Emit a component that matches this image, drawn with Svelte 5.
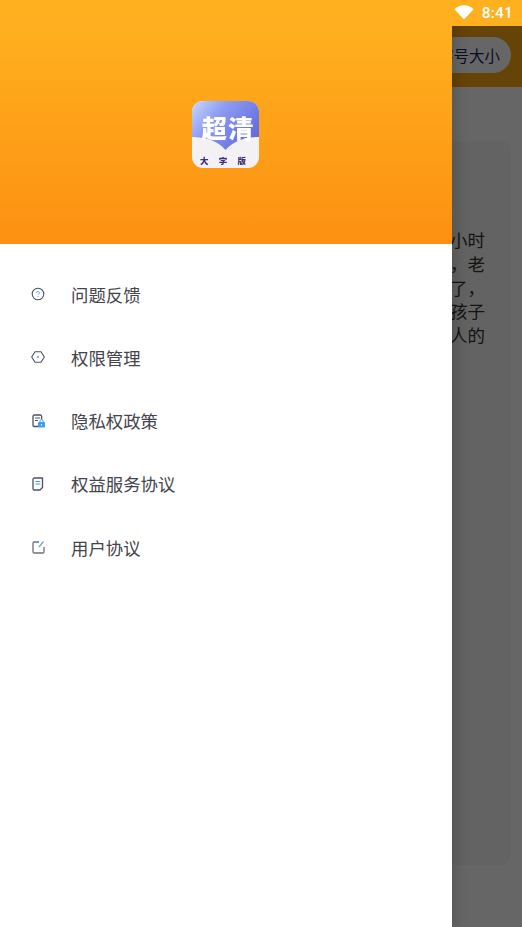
<script>
  const menu = [
    { id: "help", label: "问题反馈" },
    { id: "perm", label: "权限管理" },
    { id: "privacy", label: "隐私权政策" },
    { id: "rights", label: "权益服务协议" },
    { id: "user", label: "用户协议" }
  ];
  const lines = ["小时", "\uFF0C老", "了\uFF0C", "孩子", "人的"];
</script>

<div class="page">
  <div class="statusbar">
    <svg class="wifi" width="20" height="16" viewBox="0 0 20 16"><path d="M0.5 5.200C3 2.600 6.300 1.200 10 1.200s7 1.400 9.500 4L10 15.500z" fill="#fff" /></svg>
    <span class="time">8:41</span>
  </div>
  <div class="header">
    <div class="pill">字号大小</div>
  </div>
  <div class="body">
    <div class="card">
      {#each lines as line}
        <div class="line">{line}</div>
      {/each}
    </div>
  </div>
  <div class="footer"></div>

  <div class="scrim"></div>

  <aside class="drawer">
    <div class="hero">
      <div class="logo">
        <svg class="logo-bg" width="67" height="67" viewBox="0 0 67 67">
          <defs>
            <linearGradient id="logoBlue" x1="0" y1="0" x2="1" y2="0.6">
              <stop offset="0" stop-color="#c9dafc" />
              <stop offset="0.4" stop-color="#8e9cf3" />
              <stop offset="1" stop-color="#626de0" />
            </linearGradient>
          </defs>
          <path d="M0 0H67V36C55 36 42 39 33.500 49C25 39 12 36 0 36z" fill="url(#logoBlue)" />
        </svg>
        <div class="logo-title">超清</div>
        <div class="logo-sub">
          <span>大</span><span>字</span><span>版</span>
        </div>
      </div>
    </div>
    <nav class="menu">
      {#each menu as item}
        <div class="item">
          <svg class="icon" width="16" height="16" viewBox="0 0 16 16" fill="none">
            {#if item.id === "help"}
              <circle cx="8" cy="8" r="5.800" stroke="#4a5163" stroke-width="1.100" />
              <path d="M6.600 6.900a1.400 1.400 0 1 1 2.100 1.200c-.5.300-.7.500-.7 1" stroke="#3f9bf5" stroke-width=".9" />
              <circle cx="8" cy="10.500" r=".6" fill="#3f9bf5" />
            {:else if item.id === "perm"}
              <path d="M5 2.800h6L14.300 8 11 13.200H5L1.700 8z" stroke="#4a5163" stroke-width="1.100" stroke-linejoin="round" />
              <circle cx="8" cy="8" r="1" fill="#3f9bf5" />
            {:else if item.id === "privacy"}
              <path d="M8.500 13.500H4.300A1.300 1.300 0 0 1 3 12.200V3.300A1.300 1.300 0 0 1 4.300 2h6a1.300 1.300 0 0 1 1.300 1.300v3" stroke="#4a5163" stroke-width="1.300" />
              <path d="M5 5h5M5 7.500h3" stroke="#4a5163" stroke-width="1" />
              <rect x="8" y="9" width="7" height="5.500" rx="1" fill="#3f9bf5" />
              <path d="M10 9V8a1.500 1.500 0 0 1 3 0v1" stroke="#3f9bf5" stroke-width="1" />
              <rect x="11" y="11" width="1" height="1.500" fill="#fff" />
            {:else if item.id === "rights"}
              <path d="M4.300 2h8.200v9.500L10 14H4.300A1.300 1.300 0 0 1 3 12.700V3.300A1.300 1.300 0 0 1 4.300 2z" stroke="#4a5163" stroke-width="1.300" stroke-linejoin="round" />
              <path d="M5.300 5.500h5M5.300 8h5" stroke="#3f9bf5" stroke-width="1.200" />
            {:else}
              <path d="M9 3H4.300A1.300 1.300 0 0 0 3 4.300v8.400A1.300 1.300 0 0 0 4.300 14h8.400a1.300 1.300 0 0 0 1.300-1.300V8" stroke="#6c707c" stroke-width="1.300" />
              <path d="M9 8l4.500-5.500" stroke="#5fa8f5" stroke-width="1.200" />
            {/if}
          </svg>
          <span class="label">{item.label}</span>
        </div>
      {/each}
    </nav>
  </aside>
</div>

<style>
  :global(body) {
    margin: 0;
    font-family: "Noto Sans CJK SC", "Noto Sans", sans-serif;
  }

  .page {
    position: relative;
    display: flex;
    flex-direction: column;
    width: 522px;
    height: 927px;
    overflow: hidden;
    background: #fff;
  }

  .statusbar {
    display: flex;
    align-items: center;
    justify-content: flex-end;
    gap: 8px;
    height: 26px;
    padding-right: 9px;
    box-sizing: border-box;
    background: #ffb01f;
    position: relative;
    z-index: 3;
  }

  .wifi {
    position: relative;
    top: -1px;
  }

  .time {
    font-family: "Roboto", sans-serif;
    font-size: 15.500px;
    font-weight: 500;
    color: #fff;
    letter-spacing: 0.2px;
  }

  .header {
    display: flex;
    align-items: center;
    justify-content: flex-end;
    height: 61px;
    padding: 0 11px 3px 0;
    box-sizing: border-box;
    background: #ffa913;
  }

  .pill {
    height: 36px;
    line-height: 36px;
    padding: 0 11px 0 20px;
    border-radius: 18px;
    background: #fff;
    color: #1a2460;
    font-size: 15.500px;
  }

  .body {
    flex: 1;
    padding: 54px 11px 0 11px;
    background: #fff;
  }

  .card {
    height: 724px;
    box-sizing: border-box;
    padding: 87px 26px 0 0;
    border-radius: 10px;
    background: #f8f8f8;
  }

  .line {
    height: 23.800px;
    line-height: 23.800px;
    text-align: right;
    font-size: 17.500px;
    color: #333;
  }

  .footer {
    height: 62px;
    background: #fff;
  }

  .scrim {
    position: absolute;
    left: 0;
    right: 0;
    top: 26px;
    bottom: 0;
    z-index: 1;
    background: rgba(0, 0, 0, 0.6);
  }

  .drawer {
    position: absolute;
    left: 0;
    top: 0;
    bottom: 0;
    z-index: 2;
    width: 452px;
    background: #fff;
    box-shadow: 0 0 16px rgba(0, 0, 0, 0.25);
  }

  .hero {
    display: flex;
    align-items: flex-start;
    justify-content: center;
    height: 244px;
    padding: 101px 1px 0 0;
    box-sizing: border-box;
    background: linear-gradient(180deg, #ffb01f 0%, #ffb01f 10%, #fd9011 100%);
  }

  .logo {
    position: relative;
    flex: none;
    width: 67px;
    height: 67px;
    border-radius: 11px;
    overflow: hidden;
    background: #f3f1f3;
    filter: blur(0.4px);
  }

  .logo-bg {
    display: block;
  }

  .logo-title {
    position: absolute;
    left: 5px;
    right: 0;
    top: 9px;
    text-align: center;
    font-size: 25.500px;
    font-weight: 900;
    line-height: 34px;
    letter-spacing: 1px;
    color: #fff;
  }

  .logo-sub {
    position: absolute;
    left: 8px;
    right: 13px;
    top: 52px;
    display: flex;
    justify-content: space-between;
    font-size: 8.500px;
    font-weight: 900;
    line-height: 14px;
    color: #3d2f7a;
  }

  .menu {
    display: flex;
    flex-direction: column;
    padding-top: 18.500px;
  }

  .item {
    display: flex;
    align-items: center;
    gap: 25px;
    height: 63.250px;
    padding-left: 30px;
  }

  .icon {
    flex: none;
  }

  .label {
    font-size: 17.400px;
    color: #44444c;
  }
</style>
